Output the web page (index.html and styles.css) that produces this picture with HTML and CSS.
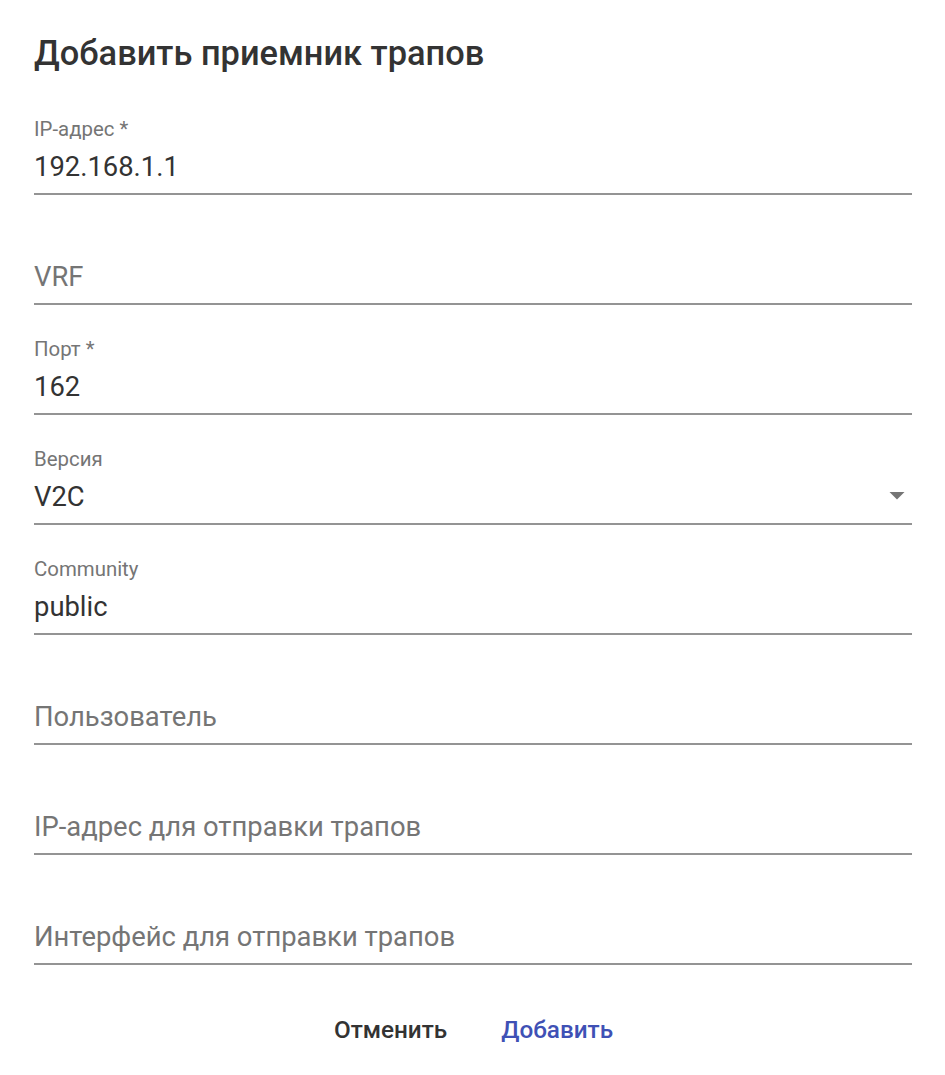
FILE: index.html
```html
<!DOCTYPE html>
<html lang="ru">
<head>
<meta charset="utf-8">
<title>Добавить приемник трапов</title>
<link rel="stylesheet" href="styles.css">
</head>
<body>
<div class="dialog">
  <h2 class="dialog-title">Добавить приемник трапов</h2>
  <div class="dialog-content">
    <div class="field">
      <div class="field-label">IP-адрес *</div>
      <div class="field-input">192.168.1.1</div>
    </div>
    <div class="field">
      <div class="field-label"></div>
      <div class="field-input placeholder">VRF</div>
    </div>
    <div class="field">
      <div class="field-label">Порт *</div>
      <div class="field-input">162</div>
    </div>
    <div class="field">
      <div class="field-label">Версия</div>
      <div class="field-input select">
        <span>V2C</span>
        <svg class="arrow" width="16" height="8" viewBox="0 0 16 8"><path d="M0.5 0 L15.5 0 L8 7.5 Z" fill="#757575"/></svg>
      </div>
    </div>
    <div class="field">
      <div class="field-label">Community</div>
      <div class="field-input">public</div>
    </div>
    <div class="field">
      <div class="field-label"></div>
      <div class="field-input placeholder">Пользователь</div>
    </div>
    <div class="field">
      <div class="field-label"></div>
      <div class="field-input placeholder">IP-адрес для отправки трапов</div>
    </div>
    <div class="field">
      <div class="field-label"></div>
      <div class="field-input placeholder">Интерфейс для отправки трапов</div>
    </div>
  </div>
  <div class="dialog-actions">
    <button class="btn btn-cancel">Отменить</button>
    <button class="btn btn-primary">Добавить</button>
  </div>
</div>
</body>
</html>
```

FILE: styles.css
```css
html, body {
  margin: 0;
  padding: 0;
  background: #ffffff;
}

body {
  font-family: Roboto, "Noto Sans", sans-serif;
  color: #333333;
}

.dialog {
  width: 945px;
  box-sizing: border-box;
  padding: 33px 33px 0 34px;
}

.dialog-title {
  margin: 0;
  font-size: 34.4px;
  line-height: 40px;
  font-weight: 500;
  color: #333333;
}

.dialog-content {
  display: flex;
  flex-direction: column;
  gap: 33px;
  margin-top: 45px;
}

.field {
  display: flex;
  flex-direction: column;
  border-bottom: 2px solid #949494;
}

.field-label {
  height: 24px;
  font-size: 20.4px;
  line-height: 24px;
  color: #757575;
  margin-bottom: 9px;
  margin-top: -1px;
}

.field-input {
  font-size: 27.4px;
  line-height: 33px;
  padding-bottom: 9px;
  margin-top: 1px;
  color: #333333;
}

.field-input.placeholder {
  color: #757575;
}

.field-input.select {
  display: flex;
  align-items: center;
  justify-content: space-between;
}

.arrow {
  margin-right: 7px;
  margin-top: -4px;
}

.dialog-actions {
  display: flex;
  justify-content: center;
  gap: 30px;
  margin-top: 44px;
  padding-left: 1px;
}

.btn {
  border: none;
  background: transparent;
  font-family: Roboto, "Noto Sans", sans-serif;
  font-size: 24.3px;
  font-weight: 500;
  line-height: 30px;
  padding: 6px 12px;
  cursor: pointer;
}

.btn-cancel {
  color: #333333;
}

.btn-primary {
  color: #3f51b5;
}
```
